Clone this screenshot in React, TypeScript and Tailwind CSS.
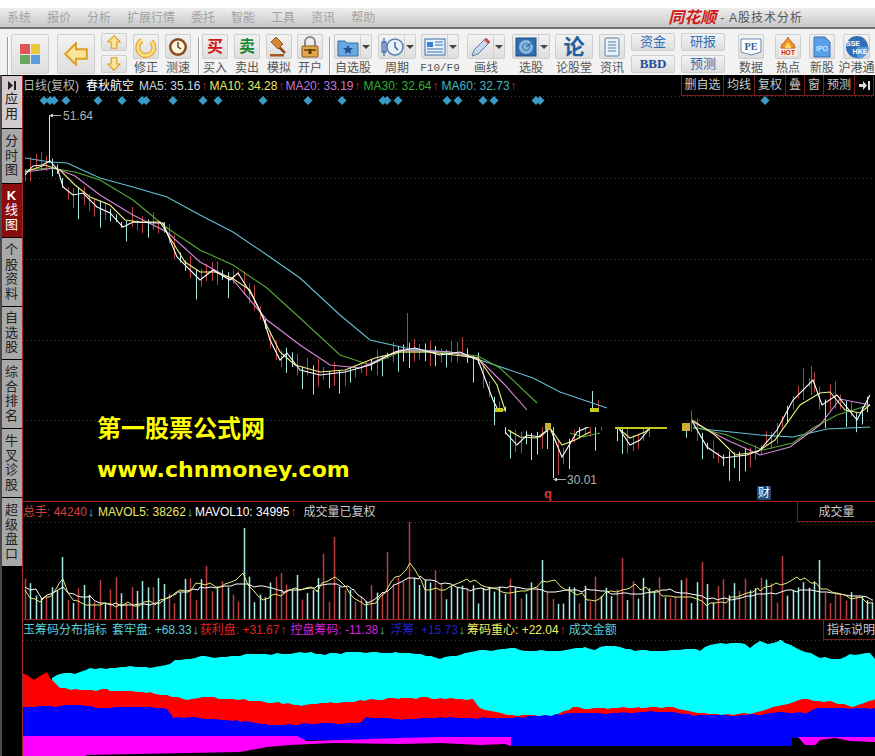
import type { FC, ReactNode } from 'react'

type Pt = [number, number]

const cjk = { fontFamily: '"Liberation Sans", "Noto Sans CJK SC", sans-serif' }

const ma60: Pt[] = [[25, 158], [50, 162], [67, 163], [100, 178], [133, 187], [167, 197], [200, 215], [233, 232], [267, 255], [300, 278], [340, 315], [370, 340], [410, 349], [450, 352], [480, 360], [533, 378], [560, 392], [607, 408]]
const ma60b: Pt[] = [[693, 428], [760, 435], [793, 437], [827, 429], [870, 427]]
const ma30: Pt[] = [[25, 170], [50, 168], [75, 172], [100, 180], [133, 200], [167, 228], [200, 250], [233, 265], [267, 288], [300, 318], [340, 355], [370, 365], [400, 352], [440, 352], [478, 356], [500, 368], [537, 403]]
const ma30b: Pt[] = [[570, 433], [583, 437], [600, 433]]
const ma30c: Pt[] = [[693, 427], [727, 435], [763, 450], [793, 443], [813, 428], [837, 415], [870, 405]]
const ma20: Pt[] = [[25, 172], [55, 168], [75, 176], [100, 195], [133, 215], [167, 232], [200, 262], [233, 280], [267, 320], [300, 345], [330, 365], [360, 368], [400, 350], [450, 352], [478, 358], [505, 385], [527, 410]]
const ma20b: Pt[] = [[693, 422], [727, 440], [760, 455], [790, 447], [820, 425], [840, 399], [870, 405]]
const ma10: Pt[] = [[25, 172], [45, 165], [60, 170], [75, 185], [90, 197], [110, 205], [125, 220], [140, 222], [160, 222], [185, 262], [200, 272], [215, 272], [232, 278], [250, 290], [265, 322], [280, 352], [295, 365], [320, 372], [345, 370], [375, 358], [400, 352], [430, 352], [478, 358], [497, 385], [505, 410]]
const ma10b: Pt[] = [[508, 430], [520, 437], [537, 438], [550, 428], [562, 445], [575, 440], [590, 432]]
const ma10c: Pt[] = [[618, 428], [630, 438], [645, 432], [650, 428]]
const ma10d: Pt[] = [[692, 420], [715, 435], [735, 455], [757, 452], [775, 440], [800, 405], [820, 393], [830, 392], [845, 410], [860, 413], [870, 405]]
const ma5: Pt[] = [[25, 175], [33, 166], [42, 165], [50, 161], [58, 170], [63, 187], [73, 195], [83, 193], [97, 207], [110, 213], [123, 227], [133, 222], [157, 223], [163, 223], [177, 257], [200, 280], [213, 270], [230, 280], [238, 273], [253, 297], [263, 317], [270, 340], [280, 360], [287, 353], [300, 370], [320, 375], [345, 372], [370, 365], [395, 352], [415, 348], [440, 355], [460, 352], [478, 360], [493, 400], [498, 410], [505, 410]]
const ma5b: Pt[] = [[505, 432], [517, 445], [527, 435], [540, 437], [550, 428], [562, 457], [577, 432], [593, 425]]
const ma5c: Pt[] = [[620, 430], [630, 445], [640, 440], [650, 428]]
const ma5d: Pt[] = [[692, 421], [707, 447], [723, 458], [747, 455], [760, 450], [777, 430], [793, 400], [813, 380], [822, 405], [837, 395], [857, 420], [870, 395]]

const volWhite: Pt[] = [[25, 588], [37, 590], [42, 598], [63, 588], [77, 597], [90, 597], [100, 603], [123, 605], [160, 603], [177, 593], [200, 588], [220, 587], [243, 585], [267, 587], [283, 592], [317, 587], [337, 583], [353, 590], [367, 603], [383, 593], [403, 580], [420, 577], [440, 583], [470, 590], [510, 587], [550, 592], [590, 590], [630, 595], [670, 590], [720, 600], [760, 595], [800, 590], [840, 593], [873, 600]]
const volYellow: Pt[] = [[25, 592], [35, 598], [45, 600], [60, 585], [63, 582], [75, 600], [85, 605], [100, 603], [123, 605], [160, 602], [175, 595], [205, 582], [220, 588], [243, 575], [258, 597], [270, 598], [290, 590], [317, 590], [335, 575], [350, 593], [365, 605], [380, 598], [395, 578], [410, 565], [425, 588], [440, 590], [470, 580], [510, 595], [550, 580], [590, 600], [630, 585], [670, 595], [710, 605], [760, 590], [800, 578], [840, 595], [873, 603]]

const cyanTop: Pt[] = [[52, 678], [60, 673], [75, 673], [90, 669], [110, 668], [125, 666], [150, 668], [170, 664], [175, 660], [190, 658], [205, 656], [215, 658], [235, 656], [250, 654], [290, 654], [300, 652], [325, 654], [355, 652], [395, 653], [410, 653], [440, 658], [460, 655], [480, 650], [505, 650], [510, 648], [520, 650], [555, 651], [585, 647], [595, 650], [600, 647], [615, 646], [630, 650], [650, 651], [680, 650], [700, 650], [710, 644], [740, 642], [750, 648], [760, 641], [768, 645], [780, 640], [800, 650], [820, 657], [840, 660], [850, 655], [870, 652], [875, 659]]
const redHead: Pt[] = [[23, 673], [30, 677], [34, 680], [40, 676], [47, 672], [50, 678], [52, 680]]
const redTop: Pt[] = [[60, 688], [75, 690], [110, 690], [150, 693], [167, 695], [187, 700], [203, 697], [233, 699], [267, 702], [300, 705], [333, 703], [367, 700], [400, 698], [440, 698], [473, 700], [480, 708], [507, 715], [553, 716], [573, 708], [607, 708], [640, 708], [673, 707], [693, 712], [717, 715], [757, 713], [783, 705], [803, 699], [833, 702], [853, 707], [875, 699]]
const blueTop: Pt[] = [[23, 707], [60, 706], [80, 705], [100, 708], [130, 707], [167, 708], [173, 717], [200, 718], [240, 721], [267, 725], [300, 724], [360, 723], [367, 717], [400, 719], [440, 718], [507, 718], [540, 716], [573, 713], [607, 713], [640, 712], [673, 712], [693, 715], [757, 715], [783, 712], [807, 713], [817, 708], [875, 708]]
const magentaTop: Pt[] = [[23, 736], [297, 736], [307, 741], [340, 740], [400, 738], [440, 737], [480, 737], [505, 737], [511, 737], [511, 746], [792, 746], [792, 737], [875, 737]]
const magentaBottom: Pt[] = [[875, 742], [850, 741], [835, 738], [820, 740], [815, 745], [805, 745], [798, 737], [792, 737], [792, 746], [511, 746], [505, 744], [480, 745], [440, 743], [400, 744], [333, 743], [290, 745], [267, 747], [240, 752], [87, 755], [85, 756], [23, 756]]

const diamonds = [44, 50, 54, 66, 98, 122, 142, 146, 173, 203, 218, 263, 308, 342, 383, 387, 398, 447, 458, 483, 494, 536, 540, 765]

const line = (p: Pt[]) => p.map(([x, y]) => `${x},${y}`).join(' ')

const rng = (seed: number) => () => {
  seed = (seed * 1664525 + 1013904223) % 4294967296
  return seed / 4294967296
}

// resample a traced edge every few pixels and roughen it, the real lines step per bar
const jag = (p: Pt[], amp: number, seed: number, step = 5.33): Pt[] => {
  const r = rng(seed)
  const out: Pt[] = []
  for (let i = 0; i < p.length - 1; i++) {
    const [x0, y0] = p[i]
    const [x1, y1] = p[i + 1]
    for (let x = x0; x < x1; x += step) {
      out.push([Math.round(x), Math.round(y0 + ((y1 - y0) * (x - x0)) / (x1 - x0) + (r() - 0.5) * amp * 2)])
    }
  }
  out.push(p[p.length - 1])
  return out
}

const interp = (x: number) => {
  const all = [...ma5, ...ma5b, ...ma5c, ...ma5d]
  for (let i = 0; i < all.length - 1; i++) {
    const [x0, y0] = all[i]
    const [x1, y1] = all[i + 1]
    if (x >= x0 && x <= x1 && x1 > x0) return y0 + ((y1 - y0) * (x - x0)) / (x1 - x0)
  }
  return null
}

const candles = (() => {
  const r = rng(11)
  const out: { x: number; top: number; bottom: number; up: boolean }[] = []
  for (let x = 25; x < 873; x += 5.33) {
    const y = interp(x)
    if (y === null) continue
    const up = r() < 0.48
    const top = y - 2 - r() * (up ? 14 : 6)
    const bottom = y + 2 + r() * (up ? 12 : 24)
    out.push({ x: Math.round(x) + 0.5, top, bottom, up })
  }
  return out
})()

const volSpikes: Record<number, [number, boolean]> = {
  49: [565, false], 61: [557, false], 83: [585, false], 130: [587, true], 205: [566, true], 242: [528, false], 283: [573, true], 298: [575, false],
  322: [554, true], 334: [537, true], 385: [552, true], 407: [522, true], 437: [570, true], 470: [565, true], 540: [560, false], 620: [558, true], 700: [562, true], 780: [556, true], 820: [560, false],
}

const volBars = (() => {
  const r = rng(29)
  const out: { x: number; top: number; up: boolean }[] = []
  for (let x = 25; x < 873; x += 5.33) {
    const rx = Math.round(x)
    const hit = Object.keys(volSpikes).find((k) => Math.abs(Number(k) - rx) < 3)
    const up = r() < 0.5
    const spike = hit ? volSpikes[Number(hit)] : null
    out.push({ x: rx + 0.5, top: spike ? spike[0] : 618 - (14 + r() * 28), up: spike ? spike[1] : up })
  }
  return out
})()

const Arrow: FC<{ up?: boolean }> = ({ up }) => (
  <span className={`inline-block w-[8px] text-center text-[13px] font-bold leading-none ${up ? 'text-[#c83030]' : 'text-[#58c8c8]'}`}>{up ? '↑' : '↓'}</span>
)

const IconBox: FC<{ children: ReactNode; className?: string }> = ({ children, className }) => (
  <div className={`flex items-center justify-center rounded-[2px] border border-[#cfcfcf] bg-gradient-to-b from-[#f2f2f2] to-[#dedede] ${className}`}>
    {children}
  </div>
)

const Tool: FC<{ label: string; className: string; children: ReactNode; split?: boolean }> = ({ label, className, children, split }) => (
  <div className={`flex flex-col items-center ${className}`}>
    {split ? (
      <div className="flex h-[25px] w-full">
        <IconBox className="w-[27px] rounded-r-none">{children}</IconBox>
        <IconBox className="flex-1 rounded-l-none border-l-0">
          <div className="h-0 w-0 border-x-[4px] border-t-[4px] border-x-transparent border-t-[#444]" />
        </IconBox>
      </div>
    ) : (
      <IconBox className="h-[25px] w-full">{children}</IconBox>
    )}
    <span className="mt-[2px] whitespace-nowrap text-[12px] leading-[15px] text-[#555]">{label}</span>
  </div>
)

const Sep = () => <div className="mt-[3px] h-[40px] w-[2px] border-x border-l-[#9a9a9a] border-r-white" />

const ArrowGold: FC<{ dir: 'up' | 'down' | 'left'; size: number }> = ({ dir, size }) => {
  const rotate = dir === 'up' ? 0 : dir === 'down' ? 180 : -90
  return (
    <svg width={size} height={size} viewBox="0 0 20 20">
      <polygon transform={`rotate(${rotate} 10 10)`} points="10,1 19,10 14,10 14,19 6,19 6,10 1,10" fill="#fbe39a" stroke="#dc9f22" strokeWidth="1.6" />
    </svg>
  )
}

const tabs: { text: string[]; h: string; active?: boolean }[] = [
  { text: ['分', '时', '图'], h: 'h-[55px]' },
  { text: ['K', '线', '图'], h: 'h-[54px]', active: true },
  { text: ['个', '股', '资', '料'], h: 'h-[69px]' },
  { text: ['自', '选', '股'], h: 'h-[53px]' },
  { text: ['综', '合', '排', '名'], h: 'h-[69px]' },
  { text: ['牛', '叉', '诊', '股'], h: 'h-[69px]' },
  { text: ['超', '级', '盘', '口'], h: 'h-[69px]' },
]

const Sidebar = () => (
  <div className="flex w-[23px] shrink-0 flex-col border-l-2 border-r border-l-[#4a4a4a] border-r-[#a02828] bg-black pt-[1px]">
    <div className="flex h-[52px] flex-col items-center bg-[#d4cccc] pr-[1px] pt-[3px] text-[13px] leading-[15px] text-[#222]">
      <svg width="8" height="9" viewBox="0 0 8 9" className="mt-[2px]"><polygon points="0,0 5,4.5 0,9" fill="#222" /><rect x="6" y="0" width="2" height="9" fill="#222" /></svg>
      <span className="mt-[1px]">应</span>
      <span>用</span>
    </div>
    {tabs.map((tab) => (
      <div
        key={tab.text.join('')}
        className={`flex ${tab.h} flex-col items-center justify-center border-t border-black pr-[1px] text-[13px] leading-[14.5px] ${tab.active ? 'bg-[#8a0d0d] text-white' : 'bg-[#a8a8a8] text-[#222]'}`}
      >
        {tab.text.map((c) => (
          <span key={c} className={c === 'K' ? 'font-bold' : ''}>{c}</span>
        ))}
      </div>
    ))}
  </div>
)

const PriceChart = () => (
  <svg width="852" height="405" viewBox="23 96 852 405" className="block">
    {[96.5, 178.5, 259.5, 340.5, 420.5].map((y) => (
      <line key={y} x1="23" x2="875" y1={y} y2={y} stroke="#7a1c1c" strokeDasharray="1 3" />
    ))}
    {diamonds.map((x) => (
      <polygon key={x} points={`${x - 4.5},100.5 ${x},96 ${x + 4.5},100.5 ${x},105`} fill="#3a9cc6" />
    ))}
    {candles.map((c) => (
      <line key={c.x} x1={c.x} x2={c.x} y1={c.top} y2={c.bottom} stroke={c.up ? '#b84040' : '#a8e8e4'} strokeWidth="1" />
    ))}
    <polyline points="49.5,163 49.5,115.5 53,115.5" fill="none" stroke="#b8f0f0" />
    <line x1="50" x2="61" y1="115.5" y2="115.5" stroke="#aaa" />
    <polygon points="49,115.5 53,113.5 53,117.5" fill="#ccc" />
    <line x1="553.5" x2="553.5" y1="430" y2="478" stroke="#b8f0f0" />
    <line x1="554" x2="566" y1="479.5" y2="479.5" stroke="#aaa" />
    <polygon points="553,479.5 557,477.5 557,481.5" fill="#ccc" />
    <line x1="558.5" x2="558.5" y1="440" y2="475" stroke="#b84040" />
    <line x1="592.5" x2="592.5" y1="391" y2="412" stroke="#a8e8e4" />
    <line x1="598.5" x2="598.5" y1="400" y2="412" stroke="#b84040" />
    <line x1="407.5" x2="407.5" y1="313" y2="348" stroke="#b84040" />
    <line x1="803.5" x2="803.5" y1="368" y2="400" stroke="#b84040" />
    <line x1="811.5" x2="811.5" y1="366" y2="395" stroke="#b84040" />
    {[ma60, ma60b].map((p, i) => <polyline key={i} points={line(p)} fill="none" stroke="#62c0d0" strokeWidth="1.1" />)}
    {[ma30, ma30b, ma30c].map((p, i) => <polyline key={i} points={line(p)} fill="none" stroke="#58a838" strokeWidth="1.1" />)}
    {[ma20, ma20b].map((p, i) => <polyline key={i} points={line(p)} fill="none" stroke="#d88ad8" strokeWidth="1.1" />)}
    {[ma10, ma10b, ma10c, ma10d].map((p, i) => <polyline key={i} points={line(p)} fill="none" stroke="#f0f080" strokeWidth="1.1" />)}
    {[ma5, ma5b, ma5c, ma5d].map((p, i) => <polyline key={i} points={line(p)} fill="none" stroke="#ffffff" strokeWidth="1.1" />)}
    <rect x="497" y="412" width="190" height="15" fill="#000" />
    <rect x="604" y="427" width="10" height="30" fill="#000" />
    <rect x="652" y="427" width="30" height="30" fill="#000" />
    <rect x="495" y="408" width="8" height="4" fill="#c8c820" />
    <rect x="590" y="408" width="9" height="4" fill="#c8c820" />
    <rect x="615" y="427" width="52" height="2" fill="#c8c820" />
    <rect x="545" y="423" width="6" height="7" fill="#c8b030" />
    <rect x="682" y="423" width="8" height="8" fill="#c8b030" />
  </svg>
)

const VolumeChart = () => (
  <svg width="852" height="97" viewBox="23 522 852 97" className="block">
    <line x1="23" x2="875" y1="522.5" y2="522.5" stroke="#7a1c1c" strokeDasharray="1 3" />
    <line x1="23" x2="875" y1="570.5" y2="570.5" stroke="#7a1c1c" strokeDasharray="1 3" />
    {volBars.map((b) => (
      <line key={b.x} x1={b.x} x2={b.x} y1={b.top} y2="619" stroke={b.up ? '#b84040' : '#a8e8e4'} strokeWidth="1.5" />
    ))}
    <polyline points={line(jag(volWhite, 1.5, 5))} fill="none" stroke="#ffffff" strokeWidth="1" />
    <polyline points={line(jag(volYellow, 3, 7))} fill="none" stroke="#e8e878" strokeWidth="1" />
  </svg>
)

const ChipChart = () => (
  <svg width="852" height="116" viewBox="23 640 852 116" className="block">
    <line x1="23" x2="875" y1="640.5" y2="640.5" stroke="#7a1c1c" strokeDasharray="1 3" />
    <polygon points={line([...jag(cyanTop, 0.8, 3), [875, 720], [52, 720]])} fill="#00ffff" />
    <polygon points={line([...redHead, ...jag(redTop, 0.8, 9), [875, 730], [23, 730]])} fill="#ff0000" />
    <polygon points={line([...jag(blueTop, 0.6, 13), [875, 738], [792, 738], [792, 746], [511, 746], [511, 740], [23, 740]])} fill="#0000ff" />
    <polygon points={line([...magentaTop, ...magentaBottom])} fill="#ff00ff" />
    <rect x="511" y="736" width="281" height="10" fill="#0000ff" />
  </svg>
)

export default function App() {
  return (
    <div className="flex h-[756px] w-[875px] flex-col overflow-hidden bg-white" style={cjk}>
      <div className="h-2 shrink-0 bg-white" />
      <div className="flex h-[19px] shrink-0 items-center justify-between bg-gradient-to-b from-[#eeeeee] to-[#c8c8c8] pl-[7px] pr-[72px] text-[12px] text-[#a2a2a2]">
        <div className="flex gap-[16px]">
          {['系统', '报价', '分析', '扩展行情', '委托', '智能', '工具', '资讯', '帮助'].map((m) => (
            <span key={m}>{m}</span>
          ))}
        </div>
        <div className="flex items-center gap-[4px]">
          <span className="text-[16px] font-bold italic leading-none text-[#d01818]">同花顺</span>
          <span className="tracking-[1px] text-[#555]">- A股技术分析</span>
        </div>
      </div>
      <div className="h-[2px] shrink-0 bg-[#707070]" />
      <div className="flex h-[46px] shrink-0 items-start bg-[#f2f2f2] pl-[7px] pt-[5px]">
        <Sep />
        <IconBox className="ml-[2px] h-[40px] w-[38px]">
          <div className="grid h-[20px] w-[20px] grid-cols-2 grid-rows-2 gap-px">
            <div className="bg-[#e25555]" />
            <div className="bg-[#e8c93c]" />
            <div className="bg-[#66a860]" />
            <div className="bg-[#5a9fd8]" />
          </div>
        </IconBox>
        <IconBox className="ml-[8px] h-[40px] w-[38px]"><ArrowGold dir="left" size={24} /></IconBox>
        <div className="ml-[6px] -mt-px flex w-[26px] flex-col gap-[4px]">
          <IconBox className="h-[18px]"><ArrowGold dir="up" size={14} /></IconBox>
          <IconBox className="h-[18px]"><ArrowGold dir="down" size={14} /></IconBox>
        </div>
        <Tool label="修正" className="ml-[6px] w-[26px]">
          <svg width="22" height="22" viewBox="0 0 22 22"><path d="M7 4.5a8 8 0 1 0 9 1" fill="none" stroke="#e8a828" strokeWidth="5" /><path d="M7 4.5a8 8 0 1 0 9 1" fill="none" stroke="#fbe08a" strokeWidth="2.5" /></svg>
        </Tool>
        <Tool label="测速" className="ml-[6px] w-[26px]">
          <svg width="20" height="20" viewBox="0 0 20 20"><circle cx="10" cy="10" r="9" fill="#8a4a20" /><circle cx="10" cy="10" r="6.5" fill="#fff6dc" /><path d="M10 5v5l3 2" fill="none" stroke="#333" strokeWidth="1.3" /></svg>
        </Tool>
        <div className="ml-[7px]"><Sep /></div>
        <Tool label="买入" className="ml-[2px] w-[26px]"><span className="text-[16px] font-bold leading-none text-[#d01818]">买</span></Tool>
        <Tool label="卖出" className="ml-[6px] w-[26px]"><span className="text-[16px] font-bold leading-none text-[#1c8a30]">卖</span></Tool>
        <Tool label="模拟" className="ml-[6px] w-[26px]">
          <svg width="22" height="22" viewBox="0 0 22 22"><rect x="2" y="18" width="14" height="2.5" fill="#a85a20" /><path d="M10 10l7 7" stroke="#8a4a18" strokeWidth="2.5" /><polygon points="8,1 15,8 10,13 3,6" fill="#d08838" stroke="#9a5a20" /></svg>
        </Tool>
        <Tool label="开户" className="ml-[5px] w-[26px]">
          <svg width="20" height="22" viewBox="0 0 20 22"><path d="M5 10V6a5 5 0 0 1 10 0v4" fill="none" stroke="#888" strokeWidth="2" /><rect x="2" y="10" width="16" height="11" rx="1" fill="#e0a848" stroke="#8a5a18" /><rect x="4" y="13" width="12" height="2" fill="#8a5a18" /><rect x="8.5" y="13" width="3" height="5" fill="#5a3a10" /></svg>
        </Tool>
        <div className="ml-[6px]"><Sep /></div>
        <Tool label="自选股" className="ml-[3px] w-[38px]" split>
          <svg width="22" height="20" viewBox="0 0 22 20"><path d="M1 4h7l2 2h11v13H1Z" fill="#6aa8e0" stroke="#3a70a8" /><polygon points="11,8 12.5,11 16,11.3 13.4,13.5 14.2,17 11,15 7.8,17 8.6,13.5 6,11.3 9.5,11" fill="#1f4f98" /></svg>
        </Tool>
        <Tool label="周期" className="ml-[6px] w-[38px]" split>
          <svg width="24" height="22" viewBox="0 0 24 22"><rect x="2" y="6" width="4" height="10" fill="#dfeaf8" stroke="#1f4f98" /><line x1="4" y1="2" x2="4" y2="20" stroke="#1f4f98" /><circle cx="15" cy="11" r="8" fill="#e8f0fa" stroke="#5a80b0" strokeWidth="1.5" /><path d="M15 6v5l3 3" fill="none" stroke="#1f4f98" strokeWidth="1.3" /></svg>
        </Tool>
        <Tool label="F10/F9" className="ml-[5px] w-[38px] [&>span]:font-['Liberation_Mono'] [&>span]:text-[11px]" split>
          <svg width="22" height="20" viewBox="0 0 22 20"><rect x="1" y="2" width="20" height="16" fill="#e8f0fa" stroke="#3a70a8" /><rect x="3" y="5" width="6" height="5" fill="#3a80d0" /><path d="M11 5h8M11 8h8M3 12h16M3 15h16" stroke="#3a70a8" /></svg>
        </Tool>
        <Tool label="画线" className="ml-[8px] w-[38px]" split>
          <svg width="22" height="22" viewBox="0 0 22 22"><polygon points="2,20 4,14 16,2 20,6 8,18" fill="#c8d8ec" stroke="#5a7ea8" /><polygon points="16,2 20,6 18,8 14,4" fill="#e04848" /></svg>
        </Tool>
        <Tool label="选股" className="ml-[7px] w-[38px]" split>
          <svg width="22" height="20" viewBox="0 0 22 20"><rect x="1" y="1" width="20" height="18" fill="#2f6fb0" stroke="#1f4f80" /><circle cx="11" cy="10" r="7" fill="#8ab8dc" /><circle cx="11" cy="10" r="3.5" fill="none" stroke="#2f6fb0" /><path d="M11 10l6-4" stroke="#1f4f80" /></svg>
        </Tool>
        <Tool label="论股堂" className="ml-[5px] w-[38px]"><span className="text-[21px] font-bold leading-none text-[#1f5f9f]">论</span></Tool>
        <Tool label="资讯" className="ml-[6px] w-[26px]">
          <svg width="18" height="20" viewBox="0 0 18 20"><rect x="2" y="1" width="14" height="18" rx="1" fill="#e8f0fa" stroke="#5a80a8" /><path d="M5 5h8M5 8h8M5 11h8M5 14h8" stroke="#5a80a8" /></svg>
        </Tool>
        <div className="ml-[6px] -mt-px flex w-[44px] flex-col gap-[4px] text-[13px] text-[#2f6fb0]">
          <IconBox className="h-[18px]">资金</IconBox>
          <IconBox className="h-[18px] font-['Liberation_Serif'] font-bold text-[#1f4f98]">BBD</IconBox>
        </div>
        <div className="ml-[6px] -mt-px flex w-[44px] flex-col gap-[4px] text-[13px] text-[#2f6fb0]">
          <IconBox className="h-[18px]">研报</IconBox>
          <IconBox className="h-[18px]">预测</IconBox>
        </div>
        <Tool label="数据" className="ml-[13px] w-[26px]">
          <svg width="22" height="18" viewBox="0 0 22 18"><path d="M1 1h20v13l-10 3L1 14Z" fill="#fff" stroke="#6a8ab0" /><text x="11" y="12" textAnchor="middle" fontSize="10" fontWeight="700" fontFamily="Liberation Serif" fill="#2f5f90">PE</text></svg>
        </Tool>
        <Tool label="热点" className="ml-[11px] w-[26px]">
          <svg width="22" height="22" viewBox="0 0 22 22"><path d="M11 1c1 4 7 6 7 11H4C4 7 9 6 11 1Z" fill="#f09030" stroke="#c86018" /><path d="M11 6c1 2 3 3 3 6H8c0-3 2-4 3-6Z" fill="#ffd860" /><rect x="2" y="13" width="18" height="7" fill="#fbf0e0" /><text x="11" y="19" textAnchor="middle" fontSize="6.5" fontWeight="700" fontFamily="Liberation Sans" fill="#c02020">HOT</text></svg>
        </Tool>
        <Tool label="新股" className="ml-[8px] w-[26px]">
          <svg width="18" height="22" viewBox="0 0 18 22"><path d="M1 1h11l5 5v15H1Z" fill="#5aa0e8" stroke="#3a70b0" /><text x="9" y="15" textAnchor="middle" fontSize="7" fontFamily="Liberation Sans" fill="#fff">IPO</text></svg>
        </Tool>
        <Tool label="沪港通" className="ml-[8px] w-[27px]">
          <svg width="24" height="24" viewBox="0 0 24 24"><circle cx="12" cy="12" r="11" fill="#2f6fb8" /><path d="M12 12h12a12 12 0 0 1-12 12Z" fill="#5a9ad8" /><text x="8" y="11" textAnchor="middle" fontSize="7" fontWeight="700" fontFamily="Liberation Sans" fill="#fff">SSE</text><text x="15" y="19" textAnchor="middle" fontSize="7" fontWeight="700" fontFamily="Liberation Sans" fill="#fff">HKE</text></svg>
        </Tool>
      </div>

      <div className="flex min-h-0 flex-1 bg-black">
        <Sidebar />
        <div className="flex w-[852px] flex-col">
          <div className="flex h-[21px] items-center justify-between whitespace-nowrap text-[12px]">
            <div className="flex items-center">
              <span className="text-[#b8b8b8]">日线(复权)</span>
              <span className="ml-[7px] text-white">春秋航空</span>
              <span className="ml-[5px] text-[#c8d8e8]">MA5: 35.16<Arrow up /></span>
              <span className="ml-px text-[#e8e868]">MA10: 34.28<Arrow up /></span>
              <span className="text-[#c878d8]">MA20: 33.19<Arrow up /></span>
              <span className="ml-[2px] text-[#30b030]">MA30: 32.64<Arrow up /></span>
              <span className="ml-[2px] text-[#40b8c0]">MA60: 32.73<Arrow up /></span>
            </div>
            <div className="mr-[1px] flex h-full text-[12px] text-[#c8c8c8]">
              {[
                { t: '删自选', w: 'w-[42px]' },
                { t: '均线', w: 'w-[31px]' },
                { t: '复权', w: 'w-[31px]' },
                { t: '叠', w: 'w-[19px]' },
                { t: '窗', w: 'w-[19px]' },
                { t: '预测', w: 'w-[31px]' },
              ].map((b) => (
                <div key={b.t} className={`flex ${b.w} items-center justify-center border-b border-l border-[#7a1c1c]`}>{b.t}</div>
              ))}
              <div className="flex w-[20px] items-center justify-center border-x border-b border-[#7a1c1c]">
                <svg width="11" height="9" viewBox="0 0 11 9"><path d="M0 3h4V0l4 4.5L4 9V6H0Z" fill="#ddd" /><rect x="9" y="0" width="2" height="9" fill="#ddd" /></svg>
              </div>
            </div>
          </div>
          <div className="relative h-[405px]">
            <PriceChart />
            <span className="absolute left-[40px] top-[13px] text-[12px] leading-[14px] text-[#b0b0b0]">51.64</span>
            <span className="absolute left-[544px] top-[377px] text-[12px] leading-[14px] text-[#b0b0b0]">30.01</span>
            <span className="absolute left-[521px] top-[390px] text-[13px] font-bold leading-[15px] text-[#d03838]">q</span>
            <span className="absolute left-[734px] top-[390px] bg-[#1c4a78] px-px text-[12px] leading-[14px] text-white">财</span>
            <span className="absolute left-[74px] top-[317px] text-[24px] font-bold leading-[32px] text-[#ffff00]">第一股票公式网</span>
            <span className="absolute left-[74px] top-[358px] font-['DejaVu_Sans'] text-[22px] font-bold leading-[32px] text-[#ffff00]">www.chnmoney.com</span>
          </div>
          <div className="flex h-[21px] items-center justify-between border-t border-[#a02020] whitespace-nowrap text-[12px]">
            <div className="flex items-center">
              <span className="text-[#d84040]">总手: 44240<Arrow /></span>
              <span className="ml-[3px] text-[#e8e868]">MAVOL5: 38262<Arrow /></span>
              <span className="ml-px text-white">MAVOL10: 34995<Arrow up /></span>
              <span className="ml-[6px] text-[#c8c8c8]">成交量已复权</span>
            </div>
            <div className="flex h-full w-[78px] items-center justify-center border-b border-l border-[#7a1c1c] text-[#c8c8c8]">成交量</div>
          </div>
          <div className="h-[97px]"><VolumeChart /></div>
          <div className="flex h-[21px] items-center justify-between border-t border-[#a02020] whitespace-nowrap text-[12px]">
            <div className="flex items-center">
              <span className="text-[#58d0d8]">玉筹码分布指标</span>
              <span className="ml-[5px] text-[#58d0d8]">套牢盘: +68.33<Arrow /></span>
              <span className="text-[#e02020]">获利盘: +31.67<Arrow up /></span>
              <span className="ml-[3px] text-[#d820d8]">控盘筹码: -11.38<Arrow /></span>
              <span className="ml-[4px] text-[#2020c8]">浮筹: +15.73<Arrow /></span>
              <span className="ml-px text-[#f0f068]">筹码重心: +22.04<Arrow up /></span>
              <span className="ml-[2px] text-[#58c8d8]">成交金额</span>
            </div>
            <div className="flex h-full w-[52px] items-center justify-start border-b border-l border-[#7a1c1c] pl-[3px] text-[#c8c8c8]">指标说明</div>
          </div>
          <div className="h-[116px]"><ChipChart /></div>
        </div>
      </div>
    </div>
  )
}
